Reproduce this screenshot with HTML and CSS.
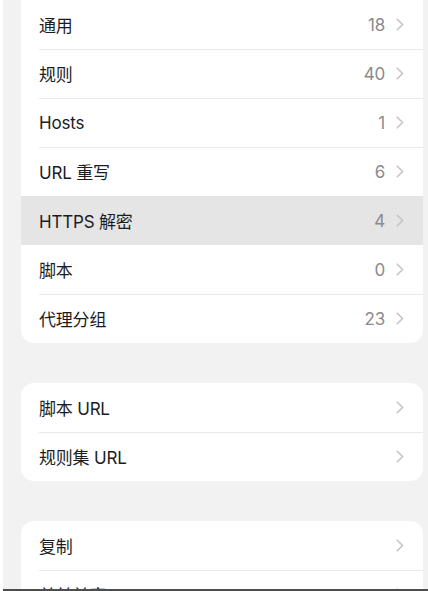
FILE: index.html
```html
<!DOCTYPE html>
<html lang="zh-CN">
<head>
<meta charset="utf-8">
<title>配置</title>
<link rel="stylesheet" href="styles.css">
</head>
<body>
<div class="screen">
  <div class="scroller">
    <section class="card card--clipped">
      <div class="row"><span class="label">通用</span><span class="value">18</span><span class="chev"><svg viewBox="0 0 8 13" width="8" height="13"><path d="M1.2 1.2 L6.6 6.5 L1.2 11.8" /></svg></span></div>
      <div class="row"><span class="label">规则</span><span class="value">40</span><span class="chev"><svg viewBox="0 0 8 13" width="8" height="13"><path d="M1.2 1.2 L6.6 6.5 L1.2 11.8" /></svg></span></div>
      <div class="row"><span class="label">Hosts</span><span class="value">1</span><span class="chev"><svg viewBox="0 0 8 13" width="8" height="13"><path d="M1.2 1.2 L6.6 6.5 L1.2 11.8" /></svg></span></div>
      <div class="row"><span class="label">URL 重写</span><span class="value">6</span><span class="chev"><svg viewBox="0 0 8 13" width="8" height="13"><path d="M1.2 1.2 L6.6 6.5 L1.2 11.8" /></svg></span></div>
      <div class="row row--pressed"><span class="label">HTTPS 解密</span><span class="value">4</span><span class="chev"><svg viewBox="0 0 8 13" width="8" height="13"><path d="M1.2 1.2 L6.6 6.5 L1.2 11.8" /></svg></span></div>
      <div class="row"><span class="label">脚本</span><span class="value">0</span><span class="chev"><svg viewBox="0 0 8 13" width="8" height="13"><path d="M1.2 1.2 L6.6 6.5 L1.2 11.8" /></svg></span></div>
      <div class="row"><span class="label">代理分组</span><span class="value">23</span><span class="chev"><svg viewBox="0 0 8 13" width="8" height="13"><path d="M1.2 1.2 L6.6 6.5 L1.2 11.8" /></svg></span></div>
    </section>
    <section class="card">
      <div class="row"><span class="label">脚本 URL</span><span class="chev"><svg viewBox="0 0 8 13" width="8" height="13"><path d="M1.2 1.2 L6.6 6.5 L1.2 11.8" /></svg></span></div>
      <div class="row"><span class="label">规则集 URL</span><span class="chev"><svg viewBox="0 0 8 13" width="8" height="13"><path d="M1.2 1.2 L6.6 6.5 L1.2 11.8" /></svg></span></div>
    </section>
    <section class="card">
      <div class="row"><span class="label">复制</span><span class="chev"><svg viewBox="0 0 8 13" width="8" height="13"><path d="M1.2 1.2 L6.6 6.5 L1.2 11.8" /></svg></span></div>
      <div class="row"><span class="label">单前兼容</span><span class="chev"><svg viewBox="0 0 8 13" width="8" height="13"><path d="M1.2 1.2 L6.6 6.5 L1.2 11.8" /></svg></span></div>
    </section>
  </div>
  <div class="edge-line"></div>
</div>
</body>
</html>
```
FILE: styles.css
```css
* { box-sizing: border-box; }
html, body {
  margin: 0;
  padding: 0;
  height: 100%;
  background: #ffffff;
}
body {
  font-family: Inter, "Noto Sans CJK SC", sans-serif;
  color: #1c1c1e;
  overflow: hidden;
}
.screen {
  height: 591px;
  margin-left: 3px;
  background: #f2f2f2;
  overflow: hidden;
  position: relative;
}
.scroller {
  display: flex;
  flex-direction: column;
  gap: 40px;
  padding: 0 5px 0 18px;
}
.card {
  background: #ffffff;
  border-radius: 13px;
  overflow: hidden;
}
.card--clipped {
  border-top-left-radius: 0;
  border-top-right-radius: 0;
}
.row {
  height: 49px;
  display: flex;
  align-items: center;
  padding: 0 19px 0 18px;
  position: relative;
  font-size: 17px;
  letter-spacing: -0.2px;
}
.row + .row::before {
  content: "";
  position: absolute;
  top: 0;
  left: 18px;
  right: 0;
  height: 1px;
  background: #e9e9eb;
}
.row--pressed {
  background: #e5e5e5;
}
.row--pressed::before,
.row--pressed + .row::before {
  display: none;
}
.label {
  flex: 1;
  white-space: nowrap;
}
.value {
  color: #8a8a8e;
  margin-right: 11px;
}
.chev {
  display: flex;
  width: 8px;
  height: 13px;
}
.chev svg path {
  fill: none;
  stroke: #c4c4c7;
  stroke-width: 1.6;
  stroke-linecap: round;
  stroke-linejoin: round;
}
.edge-line {
  position: absolute;
  left: -3px;
  right: 0;
  bottom: 0;
  height: 2px;
  background: #4d4d4d;
}
```
